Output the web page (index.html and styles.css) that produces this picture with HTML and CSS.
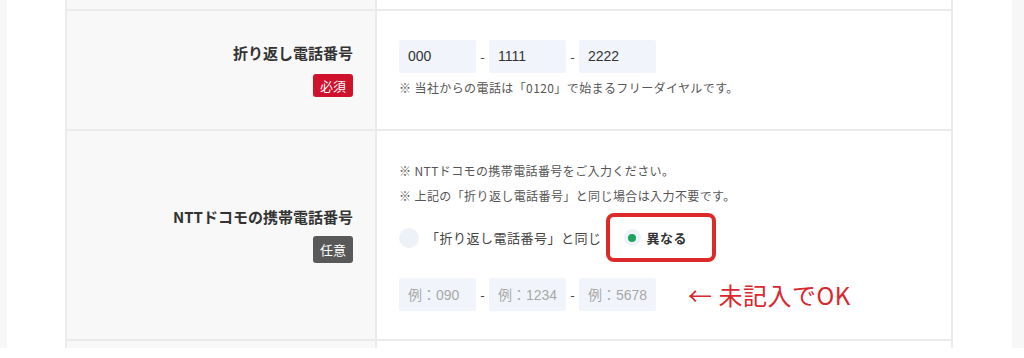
FILE: index.html
```html
<!DOCTYPE html>
<html lang="ja">
<head>
  <meta charset="UTF-8" />
  <meta name="viewport" content="width=device-width, initial-scale=1.0" />
  <title>お問い合わせフォーム</title>
  <link rel="stylesheet" href="styles.css">
</head>
<body>
  <div class="frame">
    <div class="sheet">
      <div class="form">
        <div class="row row-cut row-top">
          <div class="label"></div>
          <div class="value"></div>
        </div>

        <div class="row row-tel">
          <div class="label">
            <span class="label-text">折り返し電話番号</span>
            <span class="badge badge-req">必須</span>
          </div>
          <div class="value">
            <div class="tel">
              <input type="text" class="tel-box" value="000" />
              <span class="dash">-</span>
              <input type="text" class="tel-box" value="1111" />
              <span class="dash">-</span>
              <input type="text" class="tel-box" value="2222" />
            </div>
            <p class="note note-tel">※ 当社からの電話は「0120」で始まるフリーダイヤルです。</p>
          </div>
        </div>

        <div class="row row-docomo">
          <div class="label">
            <span class="label-text">NTTドコモの携帯電話番号</span>
            <span class="badge badge-opt">任意</span>
          </div>
          <div class="value">
            <p class="note">※ NTTドコモの携帯電話番号をご入力ください。</p>
            <p class="note">※ 上記の「折り返し電話番号」と同じ場合は入力不要です。</p>
            <div class="choices">
              <label class="choice">
                <span class="radio"></span>
                <span class="choice-text">「折り返し電話番号」と同じ</span>
              </label>
              <label class="choice choice-marked">
                <span class="radio radio-on"></span>
                <span class="choice-text choice-bold">異なる</span>
              </label>
            </div>
            <div class="tel tel-docomo">
              <input type="text" class="tel-box" placeholder="例：090" />
              <span class="dash">-</span>
              <input type="text" class="tel-box" placeholder="例：1234" />
              <span class="dash">-</span>
              <input type="text" class="tel-box" placeholder="例：5678" />
              <span class="memo">← 未記入でOK</span>
            </div>
          </div>
        </div>

        <div class="row row-cut">
          <div class="label"></div>
          <div class="value"></div>
        </div>
      </div>
    </div>
  </div>
</body>
</html>
```

FILE: styles.css
```css
body {
  margin: 0;
  background-color: #fff;
  font-family: "Noto Sans CJK JP", sans-serif;
  color: #333;
}
.frame {
  height: 348px;
  background-color: #f7f7f7;
  padding: 0 12px 0 7px;
  overflow: hidden;
}
.sheet {
  height: 100%;
  background-color: #fff;
  padding: 0 59px 0 58px;
}
.form {
  border-left: 2px solid #ebebeb;
  border-right: 2px solid #ebebeb;
}
.row {
  display: grid;
  grid-template-columns: 310px 1fr;
  border-bottom: 2px solid #ebebeb;
}
.row-top {
  height: 9px;
}
.row-cut:last-child {
  height: 7px;
  border-bottom: none;
}
.row-tel {
  height: 118px;
}
.row-docomo {
  height: 208px;
}
.label {
  background-color: #f8f8f8;
  border-right: 2px solid #ebebeb;
  display: flex;
  flex-direction: column;
  align-items: flex-end;
  justify-content: center;
  padding-right: 22px;
}
.label-text {
  font-size: 15px;
  font-weight: bold;
  line-height: 20px;
  color: #333;
}
.badge {
  width: 40px;
  margin-top: 11px;
  border-radius: 3px;
  color: #fff;
  font-size: 13px;
  text-align: center;
}
.badge-req {
  height: 23px;
  line-height: 23px;
  background-color: #d0112b;
}
.badge-opt {
  height: 27px;
  line-height: 27px;
  margin-top: 9px;
  background-color: #595959;
}
.value {
  display: flex;
  flex-direction: column;
  justify-content: center;
  padding-left: 22px;
}
.tel {
  display: flex;
  align-items: center;
}
.tel-box {
  width: 77px;
  height: 33px;
  box-sizing: border-box;
  border: none;
  border-radius: 2px;
  background-color: #f1f5fb;
  padding: 0 9px;
  font-family: "Liberation Sans", "Noto Sans CJK JP", sans-serif;
  font-size: 14px;
  color: #333;
}
.tel-box::placeholder {
  color: #a8a8a8;
}
.dash {
  width: 13px;
  text-align: center;
  font-size: 13px;
  color: #444;
}
.note {
  margin: 0;
  font-size: 12px;
  letter-spacing: 0.4px;
  line-height: 25px;
  color: #555;
}
.note-tel {
  margin-top: 4px;
  line-height: 22px;
}
.row-tel .tel {
  margin-top: -2px;
}
.choices {
  display: flex;
  align-items: center;
  margin-top: 5px;
}
.choice {
  display: flex;
  align-items: center;
  gap: 7px;
  font-size: 13px;
  letter-spacing: 0.5px;
  color: #444;
}
.choice-marked {
  margin-left: 4px;
  height: 41px;
  border: 4px solid #dc2a2a;
  border-radius: 8px;
  padding: 0 25px 0 14px;
  gap: 6px;
}
.radio {
  width: 20px;
  height: 20px;
  border-radius: 50%;
  background-color: #edf1f8;
  flex-shrink: 0;
}
.radio-on {
  width: 17px;
  height: 17px;
  display: flex;
  align-items: center;
  justify-content: center;
}
.radio-on::after {
  content: "";
  width: 8px;
  height: 8px;
  border-radius: 50%;
  background-color: #1ea35c;
}
.choice-bold {
  font-weight: bold;
  color: #333;
}
.tel-docomo {
  margin-top: 15px;
}
.memo {
  margin-left: 32px;
  font-size: 24px;
  letter-spacing: 0.5px;
  color: #d9282e;
}
```
